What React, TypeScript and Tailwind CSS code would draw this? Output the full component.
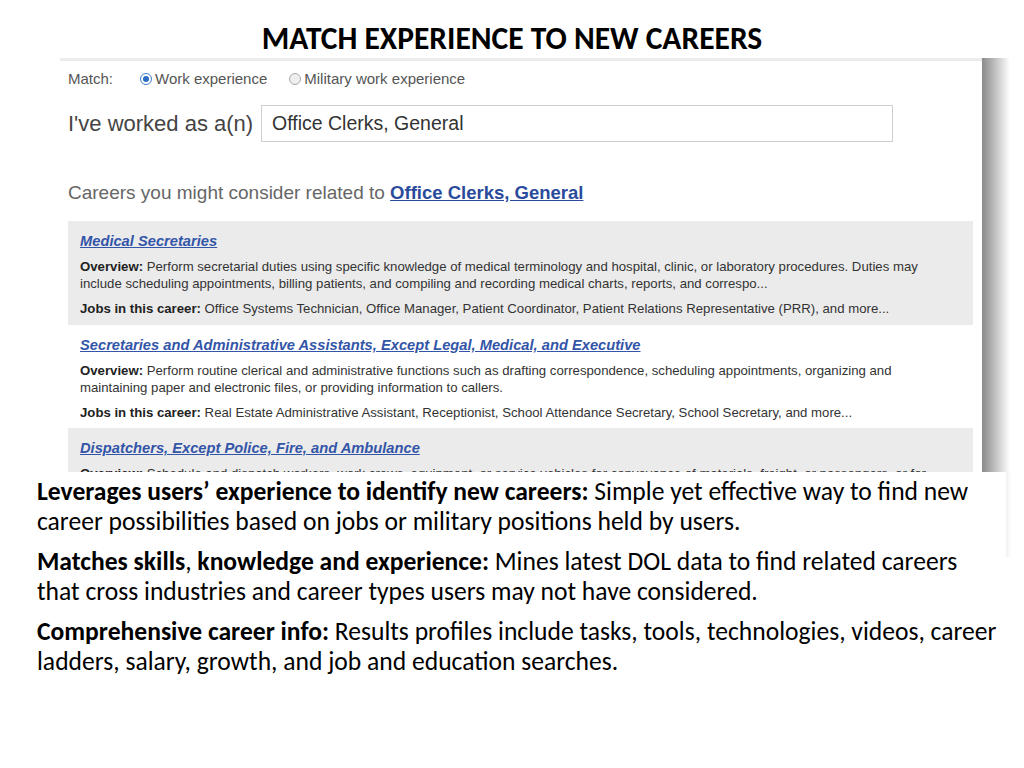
import React from 'react';

const careers = [
  {
    title: 'Medical Secretaries',
    overview: [
      'Perform secretarial duties using specific knowledge of medical terminology and hospital, clinic, or laboratory procedures. Duties may',
      'include scheduling appointments, billing patients, and compiling and recording medical charts, reports, and correspo...',
    ],
    jobs: 'Office Systems Technician, Office Manager, Patient Coordinator, Patient Relations Representative (PRR), and more...',
    shaded: true,
  },
  {
    title: 'Secretaries and Administrative Assistants, Except Legal, Medical, and Executive',
    overview: [
      'Perform routine clerical and administrative functions such as drafting correspondence, scheduling appointments, organizing and',
      'maintaining paper and electronic files, or providing information to callers.',
    ],
    jobs: 'Real Estate Administrative Assistant, Receptionist, School Attendance Secretary, School Secretary, and more...',
    shaded: false,
  },
  {
    title: 'Dispatchers, Except Police, Fire, and Ambulance',
    overview: [
      'Schedule and dispatch workers, work crews, equipment, or service vehicles for conveyance of materials, freight, or passengers, or for',
      'normal installation, service, or emergency repairs rendered outside the place of business.',
    ],
    jobs: 'Dispatcher, Service Dispatcher, Truck Dispatcher, and more...',
    shaded: true,
  },
];

const points = [
  {
    lead: 'Leverages users’ experience to identify new careers:',
    lines: [' Simple yet effective way to find new', 'career possibilities based on jobs or military positions held by users.'],
  },
  {
    lead: 'Matches skills',
    mid: ', ',
    lead2: 'knowledge and experience:',
    lines: [' Mines latest DOL data to find related careers', 'that cross industries and career types users may not have considered.'],
  },
  {
    lead: 'Comprehensive career info:',
    lines: [' Results profiles include tasks, tools, technologies, videos, career', 'ladders, salary, growth, and job and education searches.'],
  },
];

const Radio = ({ on }: { on: boolean }) => (
  <span
    className={
      on
        ? 'inline-flex items-center justify-center w-[12px] h-[12px] rounded-full border border-[#3f7fcf] bg-white'
        : 'inline-block w-[12px] h-[12px] rounded-full border border-[#aaa] bg-[#eee]'
    }
  >
    {on && <span className="w-[6px] h-[6px] rounded-full bg-[#2b6cc4]" />}
  </span>
);

const Screenshot = () => (
  <div className="flex ml-[60px] mt-[8px]">
    <div className="w-[922px] h-[414px] overflow-hidden bg-white border-t-[3px] border-[#ececec] font-['Liberation_Sans',Arial,sans-serif]">
      <div className="flex items-center h-[36px] pl-[8px] text-[15px] text-[#555]">
        <span className="w-[72px]">Match:</span>
        <span className="flex items-center gap-[3px]">
          <Radio on />
          <span>Work experience</span>
        </span>
        <span className="flex items-center gap-[3px] ml-[22px]">
          <Radio on={false} />
          <span>Military work experience</span>
        </span>
      </div>
      <div className="flex items-center pt-[8px] pl-[8px]">
        <span className="text-[22px] text-[#444] w-[193px]">I've worked as a(n)</span>
        <div className="w-[632px] h-[37px] border border-[#cfcfcf] flex items-center pl-[10px] text-[19.5px] text-[#333]">
          Office Clerks, General
        </div>
      </div>
      <div className="pl-[8px] pt-[40px] h-[79px] box-border">
        <p className="text-[19px] text-[#666] leading-[22px] whitespace-nowrap">
          Careers you might consider related to{' '}
          <span className="text-[18.5px] font-bold text-[#2a4b9c] underline">Office Clerks, General</span>
        </p>
      </div>
      <div className="ml-[8px] w-[905px]">
        {careers.map((c, i) => (
          <div
            key={c.title}
            className={
              (c.shaded ? 'bg-[#ebebeb] ' : 'bg-white ') +
              (i === 1 ? 'h-[103px] ' : 'h-[104px] ') +
              'pl-[12px] pt-[11px] box-border'
            }
          >
            <div className="text-[14.7px] leading-[18px] font-bold italic text-[#3355a8] underline whitespace-nowrap">{c.title}</div>
            <div className="mt-[7.5px] text-[13.2px] leading-[17px] text-[#333] whitespace-nowrap">
              <div>
                <span className="font-bold text-[#222]">Overview:</span> {c.overview[0]}
              </div>
              <div>{c.overview[1]}</div>
            </div>
            <div className="mt-[8px] text-[13.2px] leading-[17px] text-[#333] whitespace-nowrap">
              <span className="font-bold text-[#222]">Jobs in this career:</span> {c.jobs}
            </div>
          </div>
        ))}
      </div>
    </div>
    <div className="w-[28px] h-[414px] bg-gradient-to-r from-[#8a8a8a] via-[#c4c4c4] to-white" />
  </div>
);

export default function App() {
  return (
    <div className="w-[1024px] h-[768px] bg-white overflow-hidden text-black">
      <h1 className="pt-[19px] h-[50px] box-border text-center text-[31.5px] leading-[38px] font-bold font-['Carlito',Lato,sans-serif]">
        MATCH EXPERIENCE TO NEW CAREERS
      </h1>
      <Screenshot />
      <div className="flex">
        <div className="w-[1006px] pl-[37px] pt-[4px] font-['Carlito',Lato,sans-serif] text-[26.67px] leading-[30px]">
          <div className="origin-left scale-x-[0.96]">
            {points.map((p, i) => (
              <div key={i} className={i === 0 ? '' : 'mt-[10px]'}>
                <div className="whitespace-nowrap">
                  <span className="font-bold">{p.lead}</span>
                  {p.mid}
                  {p.lead2 && <span className="font-bold">{p.lead2}</span>}
                  {p.lines[0]}
                </div>
                <div className="whitespace-nowrap">{p.lines[1]}</div>
              </div>
            ))}
          </div>
        </div>
        <div className="w-[6px] h-[85px] bg-gradient-to-r from-[#f2f2f2] to-white" />
      </div>
    </div>
  );
}
